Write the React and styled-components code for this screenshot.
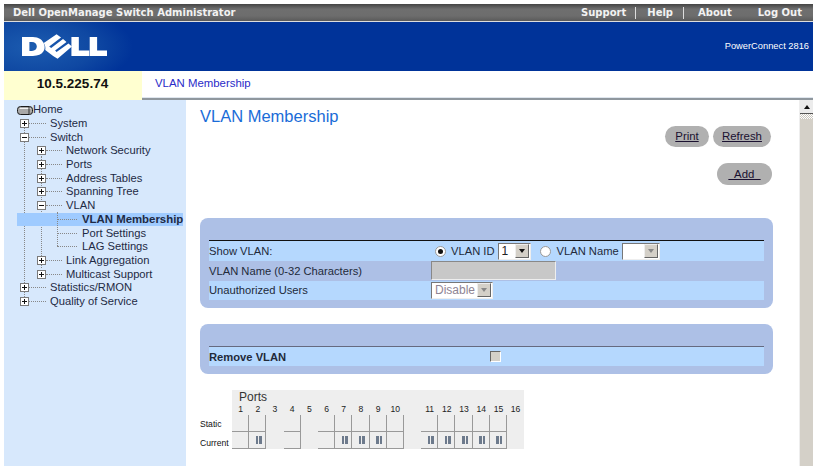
import React from "react";
import styled, { createGlobalStyle } from "styled-components";

const Global = createGlobalStyle`
  html, body { margin: 0; padding: 0; background: #fff; overflow: hidden; }
  body { font-family: "Liberation Sans", Arial, sans-serif; font-size: 11px; color: #1a1a2a; }
`;
const Page = styled.div`
  width: 813px; height: 466px; box-sizing: border-box; padding: 4px 0 0 4px;
  display: flex; flex-direction: column; overflow: hidden; background: #fff;
`;
const TopBar = styled.div`
  height: 18px; flex: none; display: flex; align-items: center; justify-content: space-between;
  background: linear-gradient(#444, #6f6f6f 30%, #6d6d6d 70%, #5a5a5a);
  border-bottom: 1px solid #ddd; box-sizing: border-box; color: #f2f2f2;
  font-family: "DejaVu Sans", sans-serif; font-weight: 700; font-size: 10px; padding: 0 0 0 9px;
`;
const TopLinks = styled.div`display: flex; height: 100%; align-items: center; padding-right: 11px;`;
const TopLink = styled.span`
  padding: 0 ${p => p.$pr}px 0 ${p => p.$pl}px; line-height: 12px;
  border-right: ${p => p.$sep ? "1px solid #ddd" : "0"};
`;
const Brand = styled.div`
  height: 49px; flex: none; display: flex; align-items: center; justify-content: space-between;
  background: radial-gradient(ellipse 110px 48px at 30px 25px, #1c5cb0 0%, #0f48a2 55%, #003399 90%), #003399;
  background-color: #003399; color: #fff; padding: 0 4px 2px 18px; box-sizing: border-box; font-size: 9.3px;
`;
const Logo = styled.svg`width: 85px; height: 25px; display: block; margin-top: 2px;`;
const Crumb = styled.div`height: 29px; flex: none; display: flex;`;
const Ip = styled.div`
  width: 138px; background: #ffffd0; display: flex; align-items: center; justify-content: center;
  font-weight: 700; font-size: 13.5px; color: #111; padding: 0 1px 4px 0; box-sizing: border-box;
`;
const Tab = styled.div`
  flex: 1; display: flex; align-items: center; padding: 0 0 3px 13px; color: #2a2ac8; font-size: 11.4px;
  border-bottom: 2px solid #8f979e; box-sizing: border-box; box-shadow: inset 0 -1px 0 #dfe6ee;
`;
const Main = styled.div`flex: 1; display: flex; min-height: 0;`;
const Side = styled.nav`width: 182px; flex: none; background: #d7e8fc; position: relative; padding-top: 3px; box-sizing: border-box;`;
const Row = styled.div`
  height: 13.7px; display: flex; align-items: center; white-space: nowrap; position: relative;
  padding-left: ${p => p.$indent}px; font-size: ${p => p.$sel ? 11.4 : 11.2}px; color: #1e2a44;
  font-weight: ${p => p.$sel ? 700 : 400};
  background: ${p => p.$sel ? "#9fcbff" : "transparent"};
  margin: ${p => p.$sel ? "0 3px 0 13px" : "0"};
`;
const Label = styled.span`line-height: 13px;`;
const Box = styled.svg`width: 9px; height: 9px; flex: none; display: block;`;
const Dots = styled.span`width: ${p => p.$w}px; height: 0; border-top: 1px dotted #888; flex: none; margin-right: ${p => p.$gap}px;`;
const VLine = styled.span`
  position: absolute; left: ${p => p.$x}px; top: ${p => p.$t}px; height: ${p => p.$h}px;
  border-left: 1px dotted #888; z-index: ${p => p.$z || 0};
`;

const Content = styled.main`flex: 1; min-width: 0; display: flex;`;
const Body = styled.div`flex: 1; padding: 7px 0 0 14px; min-width: 0;`;
const Title = styled.h1`
  margin: 0; font-weight: 400; font-size: 16.5px; line-height: 18px; color: #1a6cd8;
`;
const Buttons = styled.div`
  display: flex; justify-content: flex-end; gap: 4px; margin: ${p => p.$mt}px ${p => p.$mr}px 0 0;
`;
const Pill = styled.a`
  width: ${p => p.$w}px; height: ${p => p.$h}px; border-radius: 11px; background: #b0b0b0; display: flex;
  align-items: center; justify-content: center; color: #1a1030; font-size: 11.4px; text-decoration: underline;
  white-space: pre; padding-bottom: 1px; box-sizing: border-box;
`;
const Panel = styled.section`
  width: 573px; background: #adc0e6; border-radius: 8px; padding: 22px 9px 8px 9px;
  box-sizing: border-box; margin-top: ${p => p.$mt}px;
`;
const Grid = styled.div`border-top: 1px solid ${p => p.$line};`;
const FormRow = styled.div`
  height: ${p => p.$h}px; display: flex; align-items: center; font-size: 11.2px;
  background: ${p => p.$alt ? "#adc0e6" : "#b5d8fe"}; font-weight: ${p => p.$bold ? 700 : 400};
  color: #222a3a; box-sizing: border-box;
`;
const RowLabel = styled.div`width: 222px; flex: none;`;
const Field = styled.div`display: flex; align-items: center; flex: 1;`;
const Radio = styled.span`
  width: 9px; height: 9px; border-radius: 50%; background: #fff; border: 1px solid #999; flex: none;
  margin: 0 ${p => p.$gap}px 0 ${p => p.$left}px; display: flex; align-items: center; justify-content: center;
  &::after { content: ""; width: 5px; height: 5px; border-radius: 50%; background: ${p => p.$on ? "#111" : "transparent"}; }
`;
const Select = styled.span`
  display: flex; width: ${p => p.$w}px; height: 17px; box-sizing: border-box; background: #fff;
  border: 1px solid; border-color: #777 #eee #eee #777; margin: ${p => p.$m};
  color: ${p => p.$dis ? "#8e8494" : "#222"}; font-size: 12px; align-items: center; padding-left: 3px;
`;
const SelectText = styled.span`flex: 1; white-space: nowrap; overflow: hidden;`;
const Arrow = styled.span`
  width: 14px; height: 14px; background: #d4d0c8; border: 1px solid; border-color: #eee #666 #666 #eee;
  box-sizing: border-box; margin-right: 1px; display: flex; align-items: center; justify-content: center;
  &::after { content: ""; border: 3px solid transparent; border-top: 4px solid ${p => p.$dis ? "#888" : "#111"}; border-bottom: 0; }
`;
const DisabledInput = styled.span`
  display: block; width: 125px; height: 19px; background: #c8c8c8; border: 1px solid;
  border-color: #888 #eee #eee #888; box-sizing: border-box;
`;
const Check = styled.span`
  display: block; width: 11px; height: 11px; background: #d4d0c8; border: 1px solid; border-color: #666 #fff #fff #666;
  box-sizing: border-box; margin-left: 59px;
`;
const Ports = styled.div`
  display: grid; grid-template-columns: 32px repeat(17, 17.2px); grid-template-rows: 13px 12px 17px 17px;
  margin-top: 16px; width: max-content;
`;
const PortsBg = styled.div`grid-column: 2 / -1; grid-row: 1 / 5; background: #eeeeee;`;
const PortsTitle = styled.div`
  grid-column: 2 / 8; grid-row: 1; z-index: 1; font-size: 12px; padding-left: 7px; color: #333; line-height: 15px;
`;
const Num = styled.div`
  grid-row: 2; grid-column: ${p => p.$c}; z-index: 1; font-size: 8.6px; text-align: center; line-height: 12px; color: #222;
`;
const RowName = styled.div`
  grid-column: 1; grid-row: ${p => p.$r}; font-size: 8.6px; padding-top: ${p => p.$pt}px;
  display: flex; align-items: center; color: #111; z-index: 1; box-sizing: border-box;
`;
const Cell = styled.div`
  grid-column: ${p => p.$c}; grid-row: ${p => p.$r}; z-index: 1; box-sizing: border-box;
  border-right: 1px solid #999; border-bottom: 1px solid #999; padding-left: 3px;
  display: flex; align-items: center; justify-content: center; gap: 1px;
`;
const Tick = styled.i`display: block; width: 2.5px; height: 8px; background: #6d7a8c;`;

const Scroll = styled.div`width: 14px; flex: none; background: #d4d0c8; display: flex; flex-direction: column; border-left: 1px solid #eee; box-sizing: border-box;`;
const ScrollBtn = styled.div`
  height: 14px; background: #ececec; border-bottom: 1px solid #555; box-sizing: border-box;
  display: flex; align-items: center; justify-content: center;
  &::after { content: ""; border: 3px solid transparent; border-bottom: 4px solid #111; border-top: 0; }
`;
const ScrollTrack = styled.div`
  height: 5px; background: repeating-conic-gradient(#fff 0 25%, #c9c5bd 0 50%) 0 0 / 2px 2px;
`;

const PlusBox = ({ open }) => (
  <Box viewBox="0 0 9 9">
    <rect x=".5" y=".5" width="8" height="8" fill="#fff" stroke="#7a7a7a" />
    <path d={open ? "M2 4.500h5" : "M2 4.500h5M4.500 2v5"} stroke="#111" fill="none" />
  </Box>
);
const HomeIcon = styled.svg`width: 16px; height: 10px; flex: none;`;

const tree = [
  { t: "Home", x: 13, home: true },
  { t: "System", x: 16, box: 1, w: 17 },
  { t: "Switch", x: 16, box: 1, open: 1, w: 17 },
  { t: "Network Security", x: 33, box: 1, w: 16 },
  { t: "Ports", x: 33, box: 1, w: 16 },
  { t: "Address Tables", x: 33, box: 1, w: 16 },
  { t: "Spanning Tree", x: 33, box: 1, w: 16 },
  { t: "VLAN", x: 33, box: 1, open: 1, w: 16 },
  { t: "VLAN Membership", x: 40, sel: 1, w: 20, gap: 5 },
  { t: "Port Settings", x: 53, w: 20, gap: 5 },
  { t: "LAG Settings", x: 53, w: 20, gap: 5 },
  { t: "Link Aggregation", x: 33, box: 1, w: 16 },
  { t: "Multicast Support", x: 33, box: 1, w: 16 },
  { t: "Statistics/RMON", x: 16, box: 1, w: 17 },
  { t: "Quality of Service", x: 16, box: 1, w: 17 },
];

const colOf = n => n + 1 + (n > 10 ? 1 : 0);
const portsUp = [1,2,4,6,7,8,9,10,11,12,13,14,15];
const active = new Set([2,7,8,9,11,12,13,14,15]);

export default function App() {
  return (
    <Page>
      <Global />
      <TopBar>
        <span>Dell OpenManage Switch Administrator</span>
        <TopLinks>
          <TopLink $pl={0} $pr={9} $sep>Support</TopLink>
          <TopLink $pl={11} $pr={10} $sep>Help</TopLink>
          <TopLink $pl={14} $pr={14}>About</TopLink>
          <TopLink $pl={12} $pr={0}>Log Out</TopLink>
        </TopLinks>
      </TopBar>
      <Brand>
        <Logo viewBox="0 0 86 25" aria-label="Dell logo">
          <g fill="#fff">
            <path fillRule="evenodd" d="M0 3h11c6 0 10 3 11.500 7.500C24 15 22 22 11 22H0ZM7.500 8v9h2.500c3 0 5-2 5-4.500S13 8 10 8Z" />
            <path d="M22 9 35 0 39.500 3.500 27.500 12.500 29.500 14 41.500 5 45 8 33.500 16.500 35 18 47 9.500 50.500 12.500 36 25 31.500 22 23.500 16C24 14 23.500 11 22 9Z" />
            <path d="M50 3h7.500v13.500H68V22H50ZM68.500 3H76v13.500H86V22H68.500Z" />
          </g>
        </Logo>
        <span>PowerConnect 2816</span>
      </Brand>
      <Crumb>
        <Ip>10.5.225.74</Ip>
        <Tab>VLAN Membership</Tab>
      </Crumb>
      <Main>
        <Side>
          <VLine $x={20} $t={27} $h={170} />
          <VLine $x={36.5} $t={56} $h={112} />
          <VLine $x={52.5} $t={112} $h={34} $z={1} />
          {tree.map(n => (
            <Row key={n.t} $indent={n.x} $sel={n.sel}>
              {n.home && (
                <HomeIcon viewBox="0 0 16 10">
                  <rect x=".5" y="1.500" width="15" height="8" rx="3" fill="#a8a8a8" stroke="#1c1c1c" />
                  <path d="M2.500 3.500h11" stroke="#f2f2f2" />
                  <path d="M12 2v7" stroke="#333" />
                </HomeIcon>
              )}
              {n.box && <PlusBox open={n.open} />}
              {n.w && <Dots $w={n.w} $gap={n.gap || 4} />}
              <Label>{n.t}</Label>
            </Row>
          ))}
        </Side>
        <Content>
          <Body>
            <Title>VLAN Membership</Title>
            <Buttons $mt={1} $mr={28}>
              <Pill $w={44} $h={21}>Print</Pill>
              <Pill $w={58} $h={21}>Refresh</Pill>
            </Buttons>
            <Buttons $mt={16} $mr={27}>
              <Pill $w={55} $h={22}>{"  Add  "}</Pill>
            </Buttons>
            <Panel $mt={33}>
              <Grid $line="#111">
                <FormRow $h={20}>
                  <RowLabel>Show VLAN:</RowLabel>
                  <Field>
                    <Radio $on $left={4} $gap={5} />VLAN ID
                    <Select $w={33} $m="0 0 0 3px"><SelectText>1</SelectText><Arrow /></Select>
                    <Radio $left={9} $gap={6} />VLAN Name
                    <Select $w={38} $m="0 0 0 3px" $dis><SelectText /><Arrow $dis /></Select>
                  </Field>
                </FormRow>
                <FormRow $alt $h={19.5}>
                  <RowLabel>VLAN Name (0-32 Characters)</RowLabel>
                  <Field><DisabledInput /></Field>
                </FormRow>
                <FormRow $h={19.5}>
                  <RowLabel>Unauthorized Users</RowLabel>
                  <Field><Select $w={62} $m="0" $dis><SelectText>Disable</SelectText><Arrow $dis /></Select></Field>
                </FormRow>
              </Grid>
            </Panel>
            <Panel $mt={16}>
              <Grid $line="#666a80">
                <FormRow $h={19} $bold>
                  <RowLabel>Remove VLAN</RowLabel>
                  <Field><Check /></Field>
                </FormRow>
              </Grid>
            </Panel>
            <Ports>
              <PortsBg />
              <PortsTitle>Ports</PortsTitle>
              {Array.from({ length: 16 }, (_, i) => <Num key={i} $c={colOf(i + 1)}>{i + 1}</Num>)}
              <RowName $r={3} $pt={0}>Static</RowName>
              <RowName $r={4} $pt={5}>Current</RowName>
              {portsUp.map(n => <Cell key={"s" + n} $c={colOf(n)} $r={3} />)}
              {portsUp.map(n => (
                <Cell key={"c" + n} $c={colOf(n)} $r={4}>
                  {active.has(n) && <><Tick /><Tick /></>}
                </Cell>
              ))}
            </Ports>
          </Body>
          <Scroll>
            <ScrollBtn />
            <ScrollTrack />
          </Scroll>
        </Content>
      </Main>
    </Page>
  );
}
